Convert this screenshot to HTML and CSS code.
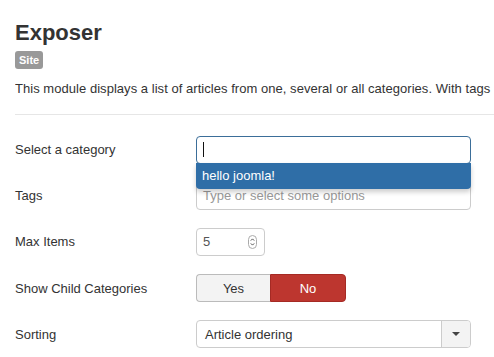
FILE: index.html
```html
<!DOCTYPE html>
<html>
<head>
<meta charset="utf-8">
<link rel="stylesheet" href="styles.css">
</head>
<body>
<div class="page">
  <h1 class="title">Exposer</h1>
  <span class="badge">Site</span>
  <p class="desc">This module displays a list of articles from one, several or all categories. With tags</p>
  <hr class="sep">
  <div class="form">
    <div class="row">
      <label class="lbl">Select a category</label>
      <div class="ctrl">
        <div class="input wide focus"><span class="caret"></span></div>
        <div class="dropdown">hello joomla!</div>
      </div>
    </div>
    <div class="row">
      <label class="lbl">Tags</label>
      <div class="ctrl">
        <div class="input wide"><span class="ph">Type or select some options</span></div>
      </div>
    </div>
    <div class="row">
      <label class="lbl">Max Items</label>
      <div class="ctrl">
        <div class="input num"><span>5</span>
          <svg class="spin" width="9" height="14" viewBox="0 0 9 14"><rect x="0.5" y="0.5" width="8" height="13" rx="4" fill="#fff" stroke="#aaa"/><path d="M2.8 5.6 L4.5 3.9 L6.2 5.6" fill="none" stroke="#555" stroke-width="1"/><path d="M2.8 8.4 L4.5 10.1 L6.2 8.4" fill="none" stroke="#555" stroke-width="1"/></svg>
        </div>
      </div>
    </div>
    <div class="row">
      <label class="lbl">Show Child Categories</label>
      <div class="ctrl">
        <div class="toggle"><span class="yes">Yes</span><span class="no">No</span></div>
      </div>
    </div>
    <div class="row">
      <label class="lbl">Sorting</label>
      <div class="ctrl">
        <div class="select"><span class="sel-text">Article ordering</span><span class="sel-btn"><svg width="8" height="4" viewBox="0 0 8 4"><path d="M0 0 H8 L4 4 Z" fill="#444"/></svg></span></div>
      </div>
    </div>
  </div>
</div>
</body>
</html>
```
FILE: styles.css
```css
html, body { margin: 0; padding: 0; background: #fff; }
body { font-family: "Liberation Sans", Arial, sans-serif; color: #333; font-size: 13px; width: 494px; height: 357px; overflow: hidden; }
.page { padding-left: 15px; }
.title { margin: 0; padding-top: 18px; font-size: 22px; line-height: 29px; font-weight: bold; color: #333; }
.badge { display: inline-block; margin-top: 4px; height: 18px; line-height: 18px; padding: 0 4px; background: #999; color: #fff; font-size: 11px; font-weight: bold; border-radius: 3px; }
.desc { margin: 11px 0 0; line-height: 18px; white-space: nowrap; overflow: hidden; letter-spacing: 0.04px; }
.sep { margin: 16px 0 0; border: 0; border-top: 1px solid #e6e6e6; height: 0; }
.form { margin-top: 20.5px; display: flex; flex-direction: column; gap: 18.2px; }
.row { display: flex; align-items: center; height: 28px; }
.lbl { width: 181px; flex: none; }
.ctrl { position: relative; height: 28px; }
.input { box-sizing: border-box; height: 28px; border: 1px solid #ccc; border-radius: 4px; background: #fff; display: flex; align-items: center; padding: 0 6px; }
.wide { width: 275px; }
.focus { border-color: #3b6e99; }
.caret { display: block; width: 1px; height: 15px; background: #111; }
.ph { color: #999; }
.dropdown { position: absolute; left: 0; top: 27px; width: 275px; height: 26px; box-sizing: border-box; background: #2f6ea7; color: #fff; line-height: 26px; padding-left: 6px; border-radius: 0 0 4px 4px; box-shadow: 0 3px 5px rgba(0,0,0,0.2); z-index: 2; }
.num { width: 69px; justify-content: space-between; padding: 0 7px 0 6px; color: #555; }
.spin { display: block; }
.toggle { display: flex; height: 28px; box-sizing: border-box; width: 150px; }
.toggle span { display: flex; align-items: center; justify-content: center; box-sizing: border-box; height: 28px; }
.yes { width: 74px; background: #f3f3f3; border: 1px solid #bbb; border-right: 0; border-radius: 4px 0 0 4px; color: #333; }
.no { width: 76px; background: #bd362f; border: 1px solid #a52a24; border-radius: 0 4px 4px 0; color: #fff; }
.select { box-sizing: border-box; width: 275px; height: 28px; border: 1px solid #ccc; border-radius: 4px; display: flex; overflow: hidden; }
.sel-text { flex: 1; display: flex; align-items: center; padding-left: 8px; }
.sel-btn { width: 28px; background: #f3f3f3; border-left: 1px solid #ccc; display: flex; align-items: center; justify-content: center; }
.sel-btn svg { display: block; }
```
